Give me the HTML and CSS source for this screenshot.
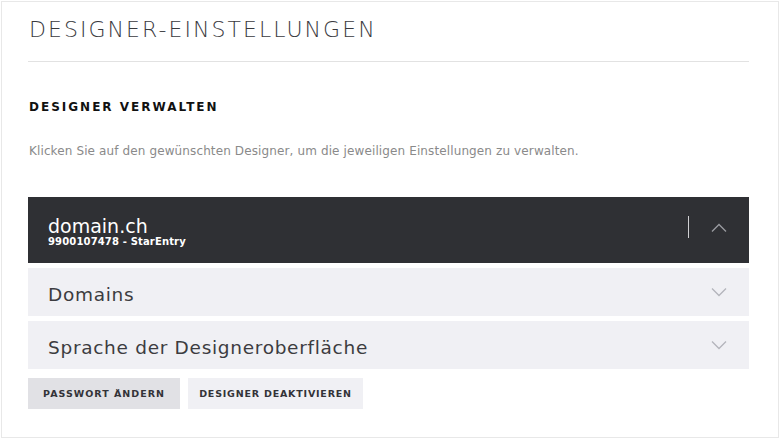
FILE: index.html
```html
<!DOCTYPE html>
<html lang="de">
<head>
<meta charset="utf-8">
<link rel="stylesheet" href="styles.css">
</head>
<body>
<div class="card">
  <h1 class="title">DESIGNER-EINSTELLUNGEN</h1>
  <hr class="divider">
  <h2 class="section">DESIGNER VERWALTEN</h2>
  <p class="intro">Klicken Sie auf den gewünschten Designer, um die jeweiligen Einstellungen zu verwalten.</p>
  <div class="accordion">
    <div class="acc-head">
      <div class="acc-name">
        <div class="acc-domain">domain.ch</div>
        <div class="acc-sub">9900107478 - StarEntry</div>
      </div>
      <div class="acc-sep"></div>
      <svg class="chev chev-up" width="16" height="9" viewBox="0 0 16 9"><path d="M1 8.5 L8 1.5 L15 8.5" fill="none" stroke="#9a9ba0" stroke-width="1.3"/></svg>
    </div>
    <div class="acc-row">
      <span class="acc-label">Domains</span>
      <svg class="chev" width="16" height="9" viewBox="0 0 16 9"><path d="M1 0.5 L8 7.5 L15 0.5" fill="none" stroke="#b4b5bb" stroke-width="1.3"/></svg>
    </div>
    <div class="acc-row">
      <span class="acc-label">Sprache der Designeroberfläche</span>
      <svg class="chev" width="16" height="9" viewBox="0 0 16 9"><path d="M1 0.5 L8 7.5 L15 0.5" fill="none" stroke="#b4b5bb" stroke-width="1.3"/></svg>
    </div>
  </div>
  <div class="actions">
    <button class="btn btn-dark">PASSWORT ÄNDERN</button>
    <button class="btn btn-light">DESIGNER DEAKTIVIEREN</button>
  </div>
</div>
</body>
</html>
```
FILE: styles.css
```css
html, body {
  margin: 0;
  padding: 0;
  background: #ffffff;
}
body {
  font-family: "DejaVu Sans", "Liberation Sans", sans-serif;
  color: #333;
}
.card {
  box-sizing: border-box;
  margin: 1px 0 0 1px;
  width: 778px;
  height: 437px;
  border: 1px solid #e8e8e8;
  padding: 14px 29px 0 26px;
}
.title {
  margin: 0 0 0 1px;
  font-size: 22px;
  line-height: 28px;
  font-weight: 300;
  letter-spacing: 2.05px;
  color: #3a3a3e;
}
.divider {
  margin: 17px 0 0 0;
  border: 0;
  border-top: 1px solid #e2e2e2;
  height: 0;
}
.section {
  margin: 37px 0 0 1px;
  font-size: 12px;
  line-height: 16px;
  font-weight: bold;
  letter-spacing: 2px;
  color: #111;
}
.intro {
  margin: 28px 0 0 1px;
  font-size: 12px;
  line-height: 16px;
  letter-spacing: 0.12px;
  color: #8a8a8a;
}
.accordion {
  margin-top: 38px;
  display: flex;
  flex-direction: column;
  gap: 5px;
}
.acc-head {
  box-sizing: border-box;
  height: 66px;
  background: #2f3034;
  display: flex;
  align-items: center;
  padding: 0 22px 6px 20px;
}
.acc-name {
  flex: 1;
  align-self: flex-start;
  padding-top: 20px;
}
.acc-domain {
  font-size: 19px;
  line-height: 19px;
  color: #fff;
}
.acc-sub {
  font-size: 10px;
  line-height: 12px;
  font-weight: bold;
  letter-spacing: 0.15px;
  color: #fff;
}
.acc-sep {
  width: 1px;
  height: 22px;
  background: #d0d0d3;
  margin-right: 22px;
}
.acc-row {
  box-sizing: border-box;
  height: 48px;
  background: #f0f0f4;
  display: flex;
  align-items: center;
  justify-content: space-between;
  padding: 0 22px 0 20px;
}
.acc-label {
  font-size: 18.5px;
  color: #3c3c40;
  letter-spacing: 0.7px;
  padding-top: 4px;
}
.actions {
  margin-top: 9px;
  display: flex;
  gap: 8px;
}
.btn {
  height: 31px;
  border: 0;
  font-family: "DejaVu Sans", sans-serif;
  font-size: 9.5px;
  font-weight: bold;
  letter-spacing: 1px;
  color: #333338;
  padding: 0;
  white-space: nowrap;
}
.btn-dark {
  background: #e1e1e5;
  width: 152px;
}
.btn-light {
  background: #f0f0f4;
  width: 175px;
  letter-spacing: 0.8px;
}
```
